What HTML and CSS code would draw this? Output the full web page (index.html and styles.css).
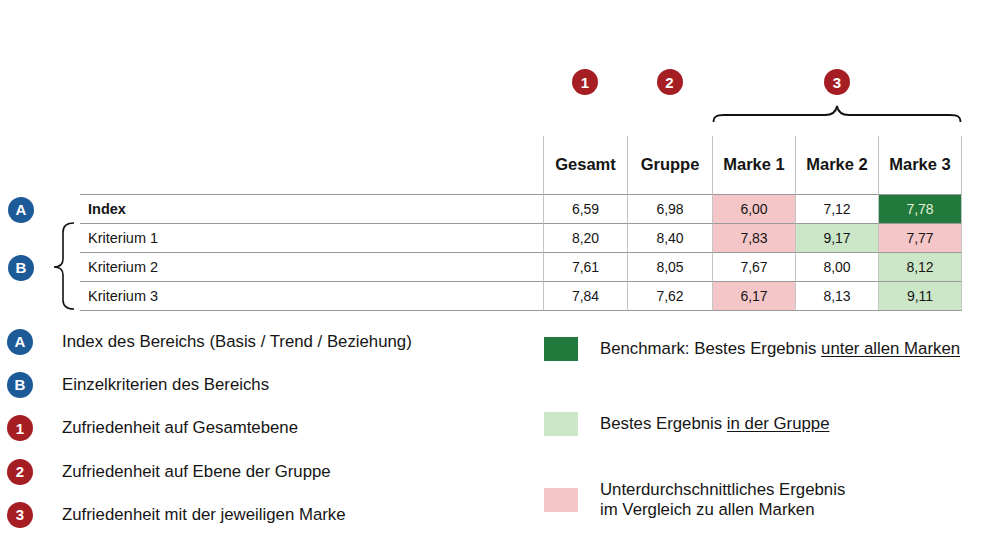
FILE: index.html
```html
<!DOCTYPE html>
<html lang="de">
<head>
<meta charset="utf-8">
<title>Zufriedenheit – Übersicht</title>
<link rel="stylesheet" href="styles.css">
</head>
<body>
<main class="page">
  <section class="chart">
    <div class="top-cell gutter"></div>
    <div class="top-cell"></div>
    <div class="top-cell"><span class="badge red">1</span></div>
    <div class="top-cell"><span class="badge red">2</span></div>
    <div class="top-cell span3">
      <span class="badge red">3</span>
      <svg class="brace-top" width="250" height="20" viewBox="0 0 250 20" aria-hidden="true">
        <path d="M1.5,19 C1.5,14 4,12 12,12 L113,12 C120,12 124,9 125,3 C126,9 130,12 137,12 L238,12 C246,12 248.5,14 248.5,19" fill="none" stroke="#111" stroke-width="1.8"/>
      </svg>
    </div>

    <div class="gutter"></div>
    <div class="head label-head"></div>
    <div class="head col">Gesamt</div>
    <div class="head col">Gruppe</div>
    <div class="head col">Marke 1</div>
    <div class="head col">Marke 2</div>
    <div class="head col last">Marke 3</div>

    <div class="gutter single"><span class="badge blue">A</span></div>
    <div class="label bold">Index</div>
    <div class="num">6,59</div>
    <div class="num">6,98</div>
    <div class="num pink">6,00</div>
    <div class="num">7,12</div>
    <div class="num last dark">7,78</div>

    <div class="gutter group">
      <span class="badge blue">B</span>
      <svg class="brace-left" width="24" height="88" viewBox="0 0 24 88" aria-hidden="true">
        <path d="M22,1 C14,1 11,4 11,10 L11,37 C11,42 8,45 2,45 C8,45 11,48 11,53 L11,78 C11,84 14,87 22,87" fill="none" stroke="#111" stroke-width="1.6"/>
      </svg>
    </div>
    <div class="label">Kriterium 1</div>
    <div class="num">8,20</div>
    <div class="num">8,40</div>
    <div class="num pink">7,83</div>
    <div class="num light">9,17</div>
    <div class="num last pink">7,77</div>

    <div class="label">Kriterium 2</div>
    <div class="num">7,61</div>
    <div class="num">8,05</div>
    <div class="num">7,67</div>
    <div class="num">8,00</div>
    <div class="num last light">8,12</div>

    <div class="label">Kriterium 3</div>
    <div class="num">7,84</div>
    <div class="num">7,62</div>
    <div class="num pink">6,17</div>
    <div class="num">8,13</div>
    <div class="num last light">9,11</div>
  </section>

  <section class="legend">
    <ul class="legend-left">
      <li><span class="badge blue">A</span><span>Index des Bereichs (Basis / Trend / Beziehung)</span></li>
      <li><span class="badge blue">B</span><span>Einzelkriterien des Bereichs</span></li>
      <li><span class="badge red">1</span><span>Zufriedenheit auf Gesamtebene</span></li>
      <li><span class="badge red">2</span><span>Zufriedenheit auf Ebene der Gruppe</span></li>
      <li><span class="badge red">3</span><span>Zufriedenheit mit der jeweiligen Marke</span></li>
    </ul>
    <ul class="legend-right">
      <li><span class="swatch dark"></span><span>Benchmark: Bestes Ergebnis <u>unter allen Marken</u></span></li>
      <li><span class="swatch light"></span><span>Bestes Ergebnis <u>in der Gruppe</u></span></li>
      <li><span class="swatch pink"></span><span>Unterdurchschnittliches Ergebnis<br>im Vergleich zu allen Marken</span></li>
    </ul>
  </section>
</main>
</body>
</html>
```

FILE: styles.css
```css
* { box-sizing: border-box; }

html, body {
  margin: 0;
  padding: 0;
  background: #ffffff;
}

body {
  font-family: "Liberation Sans", Arial, sans-serif;
  color: #151515;
}

.page {
  width: 997px;
  height: 555px;
  overflow: hidden;
}

/* ---------- table chart ---------- */
.chart {
  display: grid;
  grid-template-columns: 80px 463px 84px 85px 83px 83px 84px;
  grid-template-rows: 136px 59px 29px 29px 29px 29px;
}

.top-cell {
  display: flex;
  flex-direction: column;
  align-items: center;
  padding-top: 69px;
}

.span3 {
  grid-column: span 3;
}

.brace-top {
  display: block;
  margin-top: 8px;
}

.badge {
  display: inline-flex;
  align-items: center;
  justify-content: center;
  width: 26px;
  height: 26px;
  border-radius: 50%;
  color: #ffffff;
  font-weight: 700;
  font-size: 15px;
  flex: none;
}

.badge.red { background: #a51e24; }
.badge.blue { background: #1d5a98; }

.head {
  border-bottom: 1px solid #9a9a9a;
}

.head.col {
  display: flex;
  align-items: center;
  justify-content: center;
  border-left: 1px solid #c4c4c4;
  font-weight: 700;
  font-size: 16.5px;
  padding-bottom: 1px;
}

.head.last,
.num.last {
  border-right: 1px solid #c4c4c4;
}

.gutter.single {
  display: flex;
  align-items: center;
  padding-left: 8px;
}

.gutter.group {
  grid-row: span 3;
  display: flex;
  align-items: center;
  padding-left: 8px;
}

.brace-left {
  display: block;
  margin-left: 18px;
  margin-top: -3px;
}

.label {
  grid-column: 2;
  display: flex;
  align-items: center;
  padding-left: 8px;
  font-size: 14.5px;
  border-bottom: 1px solid #9a9a9a;
}

.label.bold { font-weight: 700; }

.num {
  display: flex;
  align-items: center;
  justify-content: center;
  font-size: 14px;
  border-bottom: 1px solid #9a9a9a;
  border-left: 1px solid #c4c4c4;
}

.pink { background: #f5c6c8; }
.light { background: #cce6c8; }
.dark { background: #217a3b; }
.num.dark { color: #e6f1dc; }

/* ---------- legend ---------- */
.legend {
  display: flex;
}

.legend ul {
  list-style: none;
  margin: 0;
  padding: 0;
}

.legend-left {
  width: 544px;
  padding: 9px 0 0 7px !important;
}

.legend-left li {
  display: flex;
  align-items: center;
  gap: 29px;
  height: 43.3px;
  font-size: 16.8px;
}

.legend-right {
  padding-top: 0 !important;
}

.legend-right li {
  display: flex;
  align-items: center;
  gap: 22px;
  height: 75.5px;
  font-size: 16.8px;
  line-height: 20px;
}

.swatch {
  display: block;
  width: 34px;
  height: 24px;
  flex: none;
}

u {
  text-underline-offset: 2px;
}
```
